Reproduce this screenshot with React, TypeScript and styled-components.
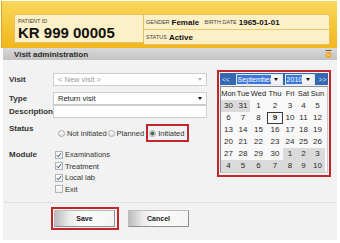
import React from 'react';
import styled, { createGlobalStyle } from 'styled-components';

const GlobalStyle = createGlobalStyle`
  html, body {
    margin: 0;
    padding: 0;
    background: #fff;
  }
  body {
    font-family: "Liberation Sans", Arial, sans-serif;
    color: #2a2a2a;
  }
`;

const Page = styled.div`
  width: 340px;
  height: 243px;
  box-sizing: border-box;
  padding: 1px 3px 3px 1px;
  display: flex;
  flex-direction: column;
`;

// patient banner
const Banner = styled.div`
  height: 47px;
  box-sizing: border-box;
  padding: 13px 7px 0 12px;
  display: flex;
  background: linear-gradient(#f9d75c, #f5c535 55%, #f1b61c);
  border-left: 1px solid #e9a514;
`;

const PatientBox = styled.div`
  width: 130px;
  height: 29px;
  box-sizing: border-box;
  padding: 3px 3px 0;
  background: #fdf0c6;
  border: 1px solid #e8c160;
  display: flex;
  flex-direction: column;
`;

const Tiny = styled.span`
  font-size: 5.5px;
  line-height: 6px;
  text-transform: uppercase;
  color: #444;
  margin-right: 2px;
`;

const PatientId = styled.div`
  font-size: 15px;
  line-height: 15px;
  font-weight: bold;
  color: #111;
  margin-top: 1px;
`;

const InfoBox = styled.div`
  flex: 1;
  height: 29px;
  display: flex;
  flex-direction: column;
  background: #fdf0c6;
  border: 1px solid #e8c160;
  border-left: none;
`;

const InfoRow = styled.div<{ $last?: boolean }>`
  flex: 1;
  display: flex;
  align-items: center;
  padding-left: 2px;
  border-bottom: ${(p) => (p.$last ? 'none' : '1px solid #ecc86c')};
`;

const InfoValue = styled.span<{ $w?: number }>`
  font-size: 8px;
  font-weight: bold;
  color: #111;
  width: ${(p) => (p.$w ? `${p.$w}px` : 'auto')};
`;

const TitleBar = styled.div`
  height: 12px;
  display: flex;
  align-items: center;
  justify-content: space-between;
  padding: 0 5px 0 11px;
  margin-left: 2px;
  background: linear-gradient(#d9d9d9, #c2c2c2);
  font-size: 8px;
  font-weight: bold;
  color: #2b2b2b;
`;

const Body = styled.div`
  flex: 1;
  margin-left: 2px;
  padding: 0 6px 0 6px;
  background: #f2f2f2;
  display: flex;
  flex-direction: column;
`;

const Main = styled.div`
  display: flex;
  align-items: flex-start;
`;

const FormCol = styled.div`
  width: 198px;
  padding-top: 13px;
  display: flex;
  flex-direction: column;
`;

const Row = styled.div<{ $gap?: number; $top?: boolean }>`
  display: grid;
  grid-template-columns: 44px 1fr;
  align-items: ${(p) => (p.$top ? 'start' : 'center')};
  margin-top: ${(p) => p.$gap ?? 0}px;
`;

const Label = styled.div<{ $pt?: number }>`
  font-size: 8px;
  font-weight: bold;
  color: #333;
  padding-top: ${(p) => p.$pt ?? 0}px;
`;

const Field = styled.div<{ $muted?: boolean }>`
  height: 13px;
  box-sizing: border-box;
  border: 1px solid #cdcdcd;
  background: #fff;
  display: flex;
  align-items: center;
  justify-content: space-between;
  padding: 0 4px;
  font-size: 7.5px;
  color: ${(p) => (p.$muted ? '#9a9a9a' : '#222')};
`;

const Caret = styled.span<{ $muted?: boolean }>`
  width: 0;
  height: 0;
  border-left: 2.5px solid transparent;
  border-right: 2.5px solid transparent;
  border-top: 3px solid ${(p) => (p.$muted ? '#b0b0b0' : '#111')};
`;

const Radios = styled.div`
  display: flex;
  align-items: center;
  padding-left: 5px;
  height: 18px;
  font-size: 7.5px;
  color: #333;
`;

const Choice = styled.label`
  display: flex;
  align-items: center;
  gap: 2px;
  margin-right: 1px;
`;

const RadioDot = styled.span<{ $on?: boolean }>`
  width: 7px;
  height: 7px;
  box-sizing: border-box;
  border-radius: 50%;
  border: 1px solid #a9a9a9;
  background: ${(p) =>
    p.$on ? 'radial-gradient(circle, #3d6d55 0 1.8px, #e9efe9 2.2px)' : 'linear-gradient(#fdfdfd, #e2e2e2)'};
`;

const Highlight = styled.div`
  display: flex;
  align-items: center;
  align-self: stretch;
  border: 2px solid #c0272d;
  padding: 0 2px 0 1px;
  margin-left: 1px;
`;

const Checks = styled.div`
  display: flex;
  flex-direction: column;
  padding-left: 2px;
`;

const CheckRow = styled.label`
  height: 11.5px;
  display: flex;
  align-items: center;
  gap: 2px;
  font-size: 7.5px;
  color: #333;
`;

const Box = styled.span`
  width: 8px;
  height: 8px;
  box-sizing: border-box;
  border: 1px solid #b3b3b3;
  background: linear-gradient(#fff, #ececec);
  display: flex;
  align-items: center;
  justify-content: center;
`;

// calendar
const CalFrame = styled.div`
  margin: 10px 0 0 10px;
  border: 2px solid #c0272d;
  padding: 1px 1px 2px 1px;
  width: 108px;
`;

const CalHead = styled.div`
  height: 12px;
  background: #3568b2;
  display: flex;
  align-items: center;
  padding: 0 1px 0 2px;
  font-size: 6.5px;
  color: #dbe7f8;
`;

const Nav = styled.span<{ $ml?: number }>`
  margin-left: ${(p) => p.$ml ?? 0}px;
`;

const Picker = styled.span<{ $ml?: number }>`
  display: flex;
  height: 9px;
  margin-left: ${(p) => p.$ml ?? 0}px;
  background: #fff;
  border: 1px solid #dfe8f5;
`;

const PickerText = styled.span<{ $w: number }>`
  width: ${(p) => p.$w}px;
  background: #3b78d6;
  color: #fff;
  font-size: 7px;
  line-height: 9px;
  padding-left: 1px;
`;

const PickerArrow = styled.span<{ $w: number }>`
  width: ${(p) => p.$w}px;
  display: flex;
  align-items: center;
  justify-content: center;
  background: #f3f3f3;
`;

const Grid = styled.div`
  margin-top: 1px;
  display: grid;
  grid-template-columns: 15px 14px 17px 16px 14px 13px 15px;
  border: 1px solid #8c8c8c;
  border-right-color: #c9c9c9;
  border-bottom-color: #c9c9c9;
  background: #f8f8f8;
`;

const DayName = styled.div`
  height: 13px;
  font-size: 7.5px;
  line-height: 13px;
  text-align: center;
  color: #222;
`;

const Day = styled.div<{ $other?: boolean; $sel?: boolean }>`
  height: 12px;
  box-sizing: border-box;
  font-size: 8px;
  line-height: ${(p) => (p.$sel ? '10px' : '12px')};
  text-align: center;
  color: #2a2a2a;
  font-weight: ${(p) => (p.$sel ? 'bold' : 'normal')};
  background: ${(p) => (p.$other ? '#dadada' : 'transparent')};
  border: ${(p) => (p.$sel ? '1px solid #3a3a3a' : 'none')};
`;

const Separator = styled.div`
  margin: 7px -4px 0 -4px;
  border-top: 1px dotted #cfcfcf;
`;

const Buttons = styled.div`
  display: flex;
  align-items: center;
  margin-top: 4px;
  padding-left: 42px;
  gap: 9px;
`;

const ButtonFrame = styled.div`
  border: 2px solid #c0272d;
  padding: 1px 2px 1px 1px;
  display: flex;
`;

const Button = styled.button`
  width: 61px;
  height: 17px;
  box-sizing: border-box;
  padding: 0;
  border: 1px solid #bdbdbd;
  border-right-color: #8f8f8f;
  border-bottom-color: #8f8f8f;
  background: linear-gradient(90deg, #bcbcbc 0, #ececec 14px, #fdfdfd 50%, #f4f4f4);
  font-family: "Liberation Sans", Arial, sans-serif;
  font-size: 7px;
  font-weight: bold;
  color: #222;
`;

const days = [
  [30, 31, 1, 2, 3, 4, 5],
  [6, 7, 8, 9, 10, 11, 12],
  [13, 14, 15, 16, 17, 18, 19],
  [20, 21, 22, 23, 24, 25, 26],
  [27, 28, 29, 30, 1, 2, 3],
  [4, 5, 6, 7, 8, 9, 10],
];

const isOther = (r: number, c: number) => (r === 0 && c < 2) || (r === 4 && c > 3) || r === 5;

function CheckMark() {
  return (
    <svg width="6" height="6" viewBox="0 0 6 6">
      <path d="M0.8 3.2 L2.3 4.8 L5.2 0.9" fill="none" stroke="#3a4f6a" strokeWidth="1" />
    </svg>
  );
}

function CollapseIcon() {
  return (
    <svg width="7" height="8" viewBox="0 0 7 8">
      <rect x="0.5" y="0" width="6" height="1" fill="#7a5a20" />
      <circle cx="3.5" cy="5" r="3" fill="#f0a52a" />
      <path d="M2 4.2 L3.5 5.8 L5 4.2" fill="none" stroke="#fff6d0" strokeWidth="0.9" />
    </svg>
  );
}

function App() {
  return (
    <Page>
      <GlobalStyle />
      <Banner>
        <PatientBox>
          <Tiny>Patient ID</Tiny>
          <PatientId>KR 999 00005</PatientId>
        </PatientBox>
        <InfoBox>
          <InfoRow>
            <Tiny>Gender</Tiny>
            <InfoValue $w={33}>Female</InfoValue>
            <Tiny>Birth date</Tiny>
            <InfoValue>1965-01-01</InfoValue>
          </InfoRow>
          <InfoRow $last>
            <Tiny>Status</Tiny>
            <InfoValue>Active</InfoValue>
          </InfoRow>
        </InfoBox>
      </Banner>

      <TitleBar>
        <span>Visit administration</span>
        <CollapseIcon />
      </TitleBar>

      <Body>
        <Main>
          <FormCol>
            <Row>
              <Label>Visit</Label>
              <Field $muted>
                <span>&lt; New visit &gt;</span>
                <Caret $muted />
              </Field>
            </Row>
            <Row $gap={6}>
              <Label>Type</Label>
              <Field>
                <span>Return visit</span>
                <Caret />
              </Field>
            </Row>
            <Row>
              <Label>Description</Label>
              <Field />
            </Row>
            <Row $gap={6} $top>
              <Label>Status</Label>
              <Radios>
                <Choice>
                  <RadioDot />
                  Not initiated
                </Choice>
                <Choice>
                  <RadioDot />
                  Planned
                </Choice>
                <Highlight>
                  <Choice>
                    <RadioDot $on />
                    Initiated
                  </Choice>
                </Highlight>
              </Radios>
            </Row>
            <Row $gap={7} $top>
              <Label $pt={1}>Module</Label>
              <Checks>
                <CheckRow>
                  <Box><CheckMark /></Box>
                  Examinations
                </CheckRow>
                <CheckRow>
                  <Box><CheckMark /></Box>
                  Treatment
                </CheckRow>
                <CheckRow>
                  <Box><CheckMark /></Box>
                  Local lab
                </CheckRow>
                <CheckRow>
                  <Box />
                  Exit
                </CheckRow>
              </Checks>
            </Row>
          </FormCol>

          <CalFrame>
            <CalHead>
              <Nav>&lt;&lt;</Nav>
              <Picker $ml={6}>
                <PickerText $w={33}>September</PickerText>
                <PickerArrow $w={11}><Caret /></PickerArrow>
              </Picker>
              <Picker $ml={2}>
                <PickerText $w={15}>2010</PickerText>
                <PickerArrow $w={12}><Caret /></PickerArrow>
              </Picker>
              <Nav $ml={4}>&gt;&gt;</Nav>
            </CalHead>
            <Grid>
              {['Mon', 'Tue', 'Wed', 'Thu', 'Fri', 'Sat', 'Sun'].map((d) => (
                <DayName key={d}>{d}</DayName>
              ))}
              {days.map((week, r) =>
                week.map((d, c) => (
                  <Day key={`${r}-${c}`} $other={isOther(r, c)} $sel={r === 1 && d === 9}>
                    {d}
                  </Day>
                ))
              )}
            </Grid>
          </CalFrame>
        </Main>

        <Separator />

        <Buttons>
          <ButtonFrame>
            <Button>Save</Button>
          </ButtonFrame>
          <Button>Cancel</Button>
        </Buttons>
      </Body>
    </Page>
  );
}

export default App;
